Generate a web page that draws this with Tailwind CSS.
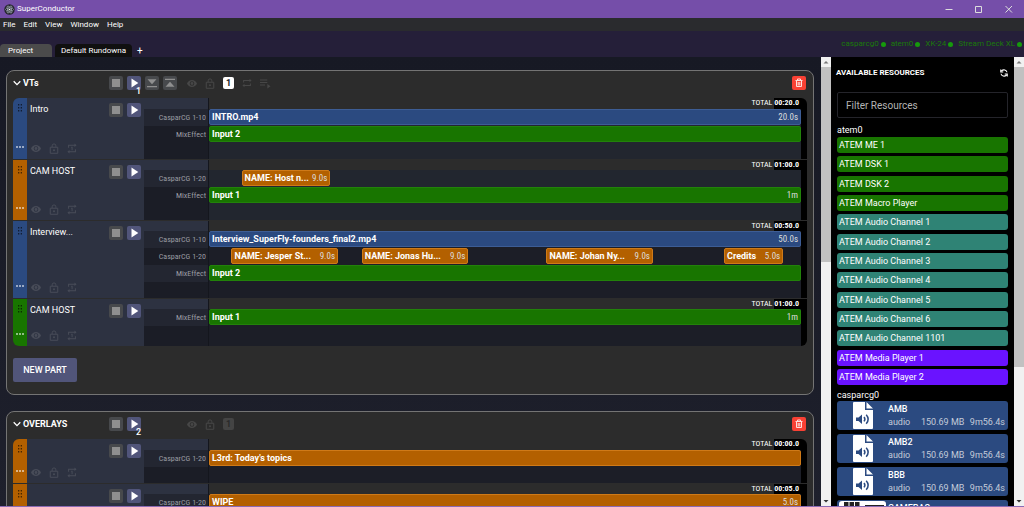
<!DOCTYPE html>
<html lang="en">
<head>
<meta charset="utf-8">
<title>SuperConductor</title>
<script src="https://cdn.jsdelivr.net/npm/@tailwindcss/browser@4"></script>
</head>
<body class="flex h-screen flex-col overflow-hidden border-b border-[#8a6bb5] bg-[#191b26] font-['Roboto','Liberation_Sans',sans-serif] text-[9px] leading-3 text-white">

<svg class="hidden" aria-hidden="true">
  <symbol id="i-play" viewBox="0 0 14 14"><path d="M4.500 2.600v8.800L11.300 7z" fill="#fff"/></symbol>
  <symbol id="i-stop" viewBox="0 0 14 14"><path d="M3 3h8v8H3z" fill="#8f8f8f"/></symbol>
  <symbol id="i-down" viewBox="0 0 14 14"><path d="M2.500 3.300h9L7 8.300zM2 10h10v1.200H2z" fill="#8f8f8f"/></symbol>
  <symbol id="i-up" viewBox="0 0 14 14"><path d="M2.500 10.700h9L7 5.700zM2 2.800h10V4H2z" fill="#8f8f8f"/></symbol>
  <symbol id="i-eye" viewBox="0 0 24 24"><path fill="currentColor" d="M12 3.500C7 3.500 2.200 7 0 12c2.200 5 7 8.500 12 8.500s9.800-3.500 12-8.500c-2.200-5-7-8.500-12-8.500zm0 14a5.500 5.500 0 1 1 0-11 5.500 5.500 0 0 1 0 11zM12 8.500a3.500 3.500 0 1 0 0 7 3.500 3.500 0 0 0 0-7z"/></symbol>
  <symbol id="i-lock" viewBox="0 0 24 26"><path fill="none" stroke="currentColor" stroke-width="2.400" d="M3 10h18v14.500H3zM7.500 9.500V6.500a4.500 4.500 0 0 1 9 0V9"/><circle cx="12" cy="17" r="2.400" fill="currentColor"/></symbol>
  <symbol id="i-repeat" viewBox="0 0 24 24"><path fill="currentColor" d="M5 5h13V2l5 4-5 4V7.400H5V11H2.600V5zm14 14H6v3l-5-4 5-4v2.600h13V13h2.400v6z"/></symbol>
  <symbol id="i-repeat1" viewBox="0 0 24 24"><path fill="currentColor" d="M5 3h13V0l5 4.200-5 4.200V5.400H5V10H2.600V3zm14 18H6v3l-5-4.200 5-4.200v3h13V14h2.400v7zM10 8h3.400v8H11v-6h-1z"/></symbol>
  <symbol id="i-list" viewBox="0 0 24 24"><path fill="currentColor" d="M0 3h16v2.400H0zm0 5.500h16v2.400H0zM0 14h11v2.400H0zm16-1v10l7-5z"/></symbol>
  <symbol id="i-trash" viewBox="0 0 14 14"><path fill="none" stroke="#ffe0dc" d="M3.500 4.500h7M5.500 4V3h3v1M4.500 5v5.500h5V5M6.200 6v3.500M7.800 6v3.500"/></symbol>
  <symbol id="i-chev" viewBox="0 0 8 8"><path fill="none" stroke="#fff" stroke-width="1.300" d="M.7 2.300 4 5.600l3.300-3.300"/></symbol>
  <symbol id="i-grip" viewBox="0 0 6 8"><path fill="#000" fill-opacity=".6" d="M1 0h1.300v1.500H1zM3.700 0H5v1.500H3.700zM1 3h1.300v1.500H1zM3.700 3H5v1.500H3.700zM1 6h1.300v1.500H1zM3.700 6H5v1.500H3.700z"/></symbol>
  <symbol id="i-audio" viewBox="0 0 20 27"><path fill="#fff" d="M1 0h11v8h8v18a1 1 0 0 1-1 1H1a1 1 0 0 1-1-1V1a1 1 0 0 1 1-1zM13.500 0 20 6.500h-6.500z"/><path fill="#2b4a80" d="M3 15.500h2.500L9 12.500v9.500l-3.500-3H3z"/><path fill="none" stroke="#2b4a80" stroke-width="1.500" d="M11 15q1.800 2.200 0 4.400M13.200 12.700q4 4.500 0 9"/></symbol>
  <symbol id="i-arrow-up" viewBox="0 0 10 10"><path fill="#777" d="M2.500 6.500h5L5 4z"/></symbol>
  <symbol id="i-arrow-down" viewBox="0 0 10 10"><path fill="#333" d="M2.500 4h5L5 6.500z"/></symbol>
</svg>

<header class="flex h-[18px] shrink-0 items-center bg-[#754ea9] pl-1 text-[8px]">
  <svg class="mr-[2px] size-[11px]" viewBox="0 0 22 22"><circle cx="11" cy="11" r="10.500" fill="#24252d"/><g fill="none" stroke="#a9b4bd" stroke-width="1.200"><ellipse cx="11" cy="11" rx="8" ry="3.200"/><ellipse cx="11" cy="11" rx="8" ry="3.200" transform="rotate(60 11 11)"/><ellipse cx="11" cy="11" rx="8" ry="3.200" transform="rotate(120 11 11)"/></g><circle cx="11" cy="11" r="1.500" fill="#fff"/></svg>
  <h1 class="grow">SuperConductor</h1>
  <button class="grid h-full w-[30px] place-items-center" aria-label="Minimize"><svg class="size-2" viewBox="0 0 8 8"><path d="M.5 4.500h7" stroke="#ddd"/></svg></button>
  <button class="grid h-full w-[30px] place-items-center" aria-label="Maximize"><svg class="size-2" viewBox="0 0 8 8"><path d="M.5 1.500h6v6h-6z" stroke="#ddd" fill="none"/></svg></button>
  <button class="grid h-full w-[30px] place-items-center" aria-label="Close"><svg class="size-2" viewBox="0 0 8 8"><path d="m.5 1 6.500 6.500M7 1 .5 7.500" stroke="#ddd" fill="none"/></svg></button>
</header>

<nav class="flex h-[13px] shrink-0 items-center gap-2 bg-[#2a2b2e] pl-[3px] text-[8px]">
  <button>File</button><button>Edit</button><button>View</button><button>Window</button><button>Help</button>
</nav>

<div class="flex h-[26px] shrink-0 items-end bg-[#251f39] text-[8px]">
  <button class="mr-[3px] h-[13px] w-[52px] rounded-t-sm bg-[#4b4b4b] pl-2 text-left">Project</button>
  <button class="h-[13px] w-[77px] rounded-t-sm bg-[#101010] text-center">Default Rundowna</button>
  <button class="ml-[5px] h-[12px] text-[10px]" aria-label="New rundown">+</button>
  <ul class="mr-[2px] ml-auto flex h-full items-center gap-[5px] text-[#1b7a0a]">
    <li class="flex items-center gap-[2px]">casparcg0<i class="size-[5px] rounded-full bg-[#169a0c]"></i></li>
    <li class="flex items-center gap-[2px]">atem0<i class="size-[5px] rounded-full bg-[#169a0c]"></i></li>
    <li class="flex items-center gap-[2px]">XK-24<i class="size-[5px] rounded-full bg-[#169a0c]"></i></li>
    <li class="flex items-center gap-[2px]">Stream Deck XL<i class="size-[5px] rounded-full bg-[#169a0c]"></i></li>
  </ul>
</div>

<div class="flex min-h-0 grow">
  <main id="groups" class="flex min-w-0 grow flex-col gap-4 overflow-hidden bg-linear-to-b from-[#171924] to-[#1e202c] pt-[13px] pr-[7px] pl-[6px]"></main>

  <div class="flex w-[10px] shrink-0 flex-col bg-[#f1f1f1]" aria-hidden="true">
    <svg class="size-[10px]"><use href="#i-arrow-up"/></svg>
    <div class="h-[195px] bg-[#c1c1c1]"></div>
    <svg class="mt-auto size-[10px]"><use href="#i-arrow-down"/></svg>
  </div>

  <aside class="flex w-[183px] shrink-0 flex-col overflow-hidden bg-black px-[6px]">
    <div class="-ml-px flex h-8 shrink-0 items-center justify-between">
      <h2 class="text-[8px] font-bold">AVAILABLE RESOURCES</h2>
      <button aria-label="Refresh"><svg class="size-[8px]" viewBox="0 0 16 16"><path fill="none" stroke="#fff" stroke-width="2.200" d="M2 9.500C3 14 9 16 13 12M14 6.500C13 2 7 0 3 4M1.500 1v5h5M14.500 15v-5h-5"/></svg></button>
    </div>
    <input type="text" aria-label="Filter Resources" placeholder="Filter Resources" class="mt-[3px] h-[26px] w-full shrink-0 rounded-[2px] border border-[#24242a] bg-black px-2 text-[10px] text-white placeholder:text-[#b4b4b4]">
    <h3 class="mt-[6px] h-3 shrink-0">atem0</h3>
    <ul id="atem" class="mt-px flex h-[248px] shrink-0 flex-col justify-between"></ul>
    <h3 class="mt-[4px] h-3 shrink-0">casparcg0</h3>
    <ul id="media" class="flex flex-col gap-1"></ul>
  </aside>

  <div class="flex w-[10px] shrink-0 flex-col bg-[#f1f1f1]" aria-hidden="true">
    <svg class="size-[10px]"><use href="#i-arrow-up"/></svg>
    <div class="h-[300px] bg-[#c1c1c1]"></div>
    <svg class="mt-auto size-[10px]"><use href="#i-arrow-down"/></svg>
  </div>
</div>

<script>
const BLUE = 'bg-[#2b4a80] border-[#3d5d95]', GREEN = 'bg-[#187500] border-[#22820a]', ORANGE = 'bg-[#b36000] border-[#cf7a18]';
const icon = (id, cls) => `<svg class="${cls}"><use href="#${id}"/></svg>`;
const stop = `<button aria-label="Stop" class="size-[14px] rounded-[2px] bg-[#47494c]">${icon('i-stop', 'size-[14px]')}</button>`;
const play = n => `<button aria-label="Play" class="relative size-[14px] rounded-[2px] bg-[#51557a]">${icon('i-play', 'size-[14px]')}${n ? `<span class="absolute top-[11px] right-0 text-[9px] leading-2 font-medium">${n}</span>` : ''}</button>`;

const clip = (c, total) => `
  <div class="absolute inset-y-0 flex items-center justify-between rounded-[2px] border px-[2px] whitespace-nowrap ${c.color}" style="left:${c.at / total * 100}%;width:${c.len / total * 100}%">
    <span class="font-bold">${c.name}</span>
    ${c.time ? `<span class="font-['Roboto_Condensed','Roboto',sans-serif] text-[#dcdcdc]">${c.time}</span>` : ''}
  </div>`;

const part = (p, first, last) => `
  <section class="flex overflow-hidden ${first ? 'rounded-t-md' : 'border-t border-[#2c2c2c]'} ${last ? 'rounded-b-md' : ''}">
    <div class="flex w-[14px] shrink-0 flex-col items-center justify-between pt-[6px] pb-[11px] ${p.color}">
      ${icon('i-grip', 'h-2 w-[6px]')}
      <button aria-label="More" class="flex gap-px"><i class="size-[2px] rounded-full bg-white/70"></i><i class="size-[2px] rounded-full bg-white/70"></i><i class="size-[2px] rounded-full bg-white/70"></i></button>
    </div>
    <div class="flex w-[117px] shrink-0 flex-col justify-between bg-[#2d3241] px-[3px] pt-[5px] pb-[5px]">
      <div class="flex items-start gap-1"><h3 class="grow">${p.name}</h3>${stop}${play()}</div>
      <div class="-mt-1 flex gap-2 pl-px text-[#484c58]">${icon('i-eye', 'h-[11px] w-[10px]')}${icon('i-lock', 'h-[11px] w-[10px]')}${icon('i-repeat1', 'h-[11px] w-[10px]')}</div>
    </div>
    <div class="flex w-[65px] shrink-0 flex-col border-r border-[#14161d] bg-[#1b1d26] font-['Roboto_Condensed','Roboto',sans-serif] text-[8px] text-[#9a9ca2]">
      <div class="bg-[#2d3241] ${first ? 'h-[11px]' : 'h-[10px]'}"></div>
      ${p.layers.map((l, i) => `<div class="flex h-[17px] items-center justify-end pr-[2px] ${i % 2 ? 'bg-[#1b1d26]' : 'bg-[#232631]'}">${l.label}</div>`).join('')}
    </div>
    <div class="min-w-0 grow ${p.tail}">
      <div class="flex justify-end bg-[#2c2c2c] ${first ? 'h-[11px]' : 'h-[10px]'}">
        <span class="font-['Roboto_Condensed','Roboto',sans-serif] text-[8px] leading-[10px]">TOTAL <b class="inline-block h-full bg-black pr-[2px]">${p.total}</b></span>
      </div>
      ${p.layers.map(l => `<div class="relative mb-px h-4">${l.clips.map(c => clip(c, p.len)).join('')}</div>`).join('')}
    </div>
    <div class="w-[6px] shrink-0 bg-black"></div>
  </section>`;

const group = g => `
  <article class="shrink-0 rounded-lg border border-[#747474] bg-[#2c2c2c] px-[6px] pb-3">
    <header class="flex h-[27px] items-center pb-[3px]">
      <button aria-label="Collapse">${icon('i-chev', 'size-2')}</button>
      <h2 class="ml-[2px] w-[86px] font-bold">${g.name}</h2>
      <div class="flex w-[74px] gap-1">${stop}${play(g.n)}${g.full ? `
        <button aria-label="Step down" class="size-[14px] rounded-[2px] bg-[#47494c]">${icon('i-down', 'size-[14px]')}</button>
        <button aria-label="Step up" class="size-[14px] rounded-[2px] bg-[#47494c]">${icon('i-up', 'size-[14px]')}</button>` : ''}</div>
      <div class="ml-1 flex items-center gap-2 text-[#474747]">
        ${icon('i-eye', 'h-[11px] w-[10px]')}${icon('i-lock', 'h-[11px] w-[10px]')}
        <button class="h-[12px] w-[11px] rounded-[2px] text-center text-[9px] leading-3 font-bold ${g.full ? 'bg-white text-[#222]' : 'bg-[#444] text-[#2a2a2a]'}">1</button>
        ${g.full ? icon('i-repeat', 'size-[10px]') + icon('i-list', 'size-[11px]') : ''}
      </div>
      <button aria-label="Delete" class="mr-px ml-auto size-[14px] rounded-[2px] bg-[#f94134]">${icon('i-trash', 'size-[14px]')}</button>
    </header>
    ${g.parts.map((p, i) => part(p, i === 0, i === g.parts.length - 1)).join('')}
    <button class="mt-3 h-6 w-16 rounded-[2px] bg-[#51557a] font-medium">NEW PART</button>
  </article>`;

const groups = [
  { name: 'VTs', n: 1, full: true, parts: [
    { name: 'Intro', color: 'bg-[#2b4a80]', total: '00:20.0', len: 20, tail: 'bg-[#22262f] pb-4', layers: [
      { label: 'CasparCG 1-10', clips: [{ name: 'INTRO.mp4', at: 0, len: 20, time: '20.0s', color: BLUE }] },
      { label: 'MixEffect', clips: [{ name: 'Input 2', at: 0, len: 20, color: GREEN }] } ] },
    { name: 'CAM HOST', color: 'bg-[#b36000]', total: '01:00.0', len: 60, tail: 'bg-[#22262f] pb-4', layers: [
      { label: 'CasparCG 1-20', clips: [{ name: 'NAME: Host n...', at: 3.3, len: 9, time: '9.0s', color: ORANGE }] },
      { label: 'MixEffect', clips: [{ name: 'Input 1', at: 0, len: 60, time: '1m', color: GREEN }] } ] },
    { name: 'Interview...', color: 'bg-[#2b4a80]', total: '00:50.0', len: 50, tail: 'bg-[#1c1e27] pb-4', layers: [
      { label: 'CasparCG 1-10', clips: [{ name: 'Interview_SuperFly-founders_final2.mp4', at: 0, len: 50, time: '50.0s', color: BLUE }] },
      { label: 'CasparCG 1-20', clips: [
        { name: 'NAME: Jesper St...', at: 1.9, len: 9, time: '9.0s', color: ORANGE },
        { name: 'NAME: Jonas Hu...', at: 12.9, len: 9, time: '9.0s', color: ORANGE },
        { name: 'NAME: Johan Ny...', at: 28.5, len: 9, time: '9.0s', color: ORANGE },
        { name: 'Credits', at: 43.5, len: 5, time: '5.0s', color: ORANGE } ] },
      { label: 'MixEffect', clips: [{ name: 'Input 2', at: 0, len: 50, color: GREEN }] } ] },
    { name: 'CAM HOST', color: 'bg-[#187500]', total: '01:00.0', len: 60, tail: 'bg-[#1c1e27] pb-5', layers: [
      { label: 'MixEffect', clips: [{ name: 'Input 1', at: 0, len: 60, time: '1m', color: GREEN }] } ] } ] },
  { name: 'OVERLAYS', n: 2, full: false, parts: [
    { name: '', color: 'bg-[#b36000]', total: '00:00.0', len: 1, tail: 'bg-[#1c1e27] pb-4', layers: [
      { label: 'CasparCG 1-20', clips: [{ name: "L3rd: Today's topics", at: 0, len: 1, color: ORANGE }] } ] },
    { name: '', color: 'bg-[#b36000]', total: '00:05.0', len: 5, tail: 'bg-[#1c1e27] pb-4', layers: [
      { label: 'CasparCG 1-20', clips: [{ name: 'WIPE', at: 0, len: 5, time: '5.0s', color: ORANGE }] } ] } ] }
];
document.getElementById('groups').innerHTML = groups.map(group).join('');

const G = 'bg-[#187500]', T = 'bg-[#2f8375]', P = 'bg-[#6a13ff]';
document.getElementById('atem').innerHTML = [
  ['ATEM ME 1', G], ['ATEM DSK 1', G], ['ATEM DSK 2', G], ['ATEM Macro Player', G],
  ['ATEM Audio Channel 1', T], ['ATEM Audio Channel 2', T], ['ATEM Audio Channel 3', T], ['ATEM Audio Channel 4', T],
  ['ATEM Audio Channel 5', T], ['ATEM Audio Channel 6', T], ['ATEM Audio Channel 1101', T],
  ['ATEM Media Player 1', P], ['ATEM Media Player 2', P]
].map(([n, c]) => `<li class="flex h-4 items-center rounded-[3px] pl-[2px] ${c}">${n}</li>`).join('');

document.getElementById('media').innerHTML = ['AMB', 'AMB2', 'BBB', 'CAMERAS'].map(n => `
  <li class="flex h-[29px] shrink-0 items-center rounded-[3px] bg-[#2b4a80] pr-[3px]">
    <div class="flex w-[51px] shrink-0 justify-center">${n === 'CAMERAS'
      ? `<svg class="h-[27px] w-[47px]" viewBox="0 0 47 27"><rect width="47" height="27" rx="3" fill="#fff"/><path fill="#222" d="M5 1h4.500v5H5zm5.500 0H15v5h-4.500zM16 1h4.500v5H16zM5 8h4.500v5H5zm5.500 0H15v5h-4.500zM16 8h4.500v5H16zM26 4h19v11H26z"/></svg>`
      : icon('i-audio', 'h-[27px] w-[20px]')}</div>
    <div class="grow leading-[13px]">
      <div class="font-medium">${n}</div>
      <div class="flex justify-between text-[#c3cbd9]"><span class="w-[33px]">audio</span><span class="grow">150.69 MB</span><span>9m56.4s</span></div>
    </div>
  </li>`).join('');
</script>
</body>
</html>
